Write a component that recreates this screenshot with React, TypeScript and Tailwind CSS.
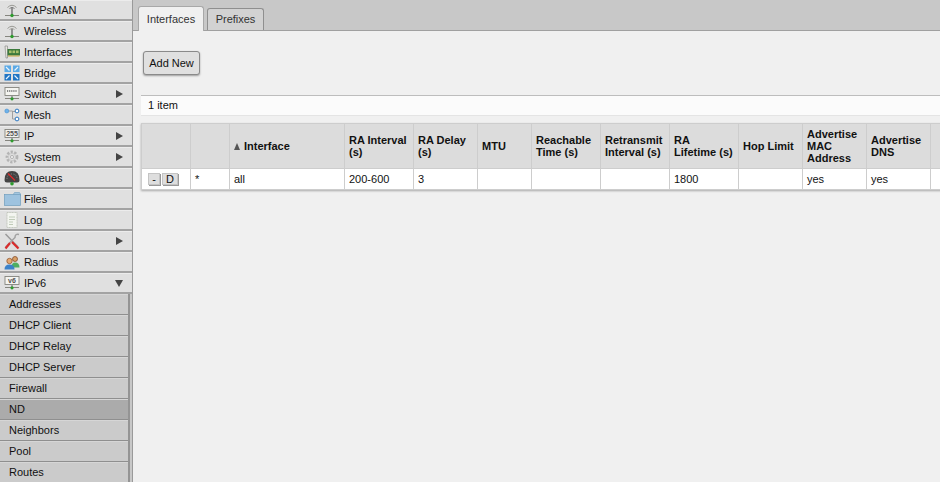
const Antenna = ({ pale }: { pale?: boolean }) => (
  <svg width="16" height="15" viewBox="0 0 16 15">
    <path d="M3.5 4.5 Q8 0 12.5 4.5" fill="none" stroke="#9a9a94" strokeWidth="1" />
    <path d="M5.5 5.5 Q8 3 10.5 5.5" fill="none" stroke={pale ? "#a8a8a2" : "#808080"} strokeWidth="1" />
    <path d="M8 5 L8 12" stroke="#666" strokeWidth="1.3" />
    <path d="M1 12.5 H15" stroke="#85857e" strokeWidth="1" />
    <circle cx="8" cy="12.5" r="1.7" fill="#2e9b2e" />
  </svg>
);

const Nic = () => (
  <svg width="16" height="14" viewBox="0 0 16 14">
    <path d="M1 1 H3.5 V13 H2 Z" fill="#e8e8e0" stroke="#8a8a8a" strokeWidth="0.7" />
    <rect x="3.5" y="4" width="12.5" height="6.5" fill="#3c7a3c" />
    <rect x="5" y="5.5" width="2.6" height="2.6" fill="#a9c06a" />
    <rect x="8.5" y="5.5" width="2.6" height="2.6" fill="#a9c06a" />
    <rect x="12" y="5.5" width="2.6" height="2.6" fill="#a9c06a" />
    <path d="M4 11 H15.5" stroke="#c9a83c" strokeWidth="1" />
  </svg>
);

const Bridge = () => (
  <svg width="16" height="16" viewBox="0 0 16 16">
    <rect x="0.5" y="0.5" width="6.5" height="6.5" fill="#5aa9e6" />
    <rect x="9" y="0.5" width="6.5" height="6.5" fill="#5aa9e6" />
    <rect x="0.5" y="9" width="6.5" height="6.5" fill="#1f74c4" />
    <rect x="9" y="9" width="6.5" height="6.5" fill="#1f74c4" />
    <path d="M2 2 L5.5 5.5 M14 2 L10.5 5.5 M2 14 L5.5 10.5 M14 14 L10.5 10.5" stroke="#e8f3fb" strokeWidth="1.2" />
  </svg>
);

const Box = ({ label, dots }: { label?: string; dots?: boolean }) => (
  <svg width="16" height="14" viewBox="0 0 16 14">
    <rect x="1" y="0.5" width="14" height="8" fill="#f4f4f0" stroke="#85857e" strokeWidth="0.9" />
    {dots && <path d="M3 4 H13" stroke="#666" strokeWidth="1.5" strokeDasharray="1.2 0.9" />}
    {label && (
      <text x="8" y="7" textAnchor="middle" fontSize="7" fontWeight="700" fontFamily="'Liberation Sans', sans-serif" fill="#555">
        {label}
      </text>
    )}
    <path d="M1 11.5 H15" stroke="#85857e" strokeWidth="1" />
    <path d="M8 9 V11.5" stroke="#666" strokeWidth="1" />
    <circle cx="8" cy="11.8" r="1.6" fill="#2e9b2e" />
  </svg>
);

const Mesh = () => (
  <svg width="16" height="14" viewBox="0 0 16 14">
    <path d="M4 3 H8.5 V11 H12 M8.5 3.5 H12" fill="none" stroke="#9a9a9a" strokeWidth="0.9" />
    <circle cx="2.8" cy="3" r="2" fill="#6fb3ea" stroke="#3a86cc" strokeWidth="0.5" />
    <circle cx="13" cy="3" r="1.9" fill="#fff" stroke="#2a76c0" strokeWidth="1" />
    <circle cx="13" cy="11" r="1.9" fill="#fff" stroke="#2a76c0" strokeWidth="1" />
  </svg>
);

const Gear = () => (
  <svg width="14" height="14" viewBox="0 0 14 14">
    <circle cx="7" cy="7" r="5" fill="none" stroke="#b4b4b4" strokeWidth="2.8" strokeDasharray="2.2 1.4" />
    <circle cx="7" cy="7" r="3.6" fill="none" stroke="#c8c8c8" strokeWidth="0.9" />
    <circle cx="7" cy="7" r="1.6" fill="#ececec" stroke="#a0a0a0" strokeWidth="0.7" />
  </svg>
);

const Gauge = () => (
  <svg width="16" height="16" viewBox="0 0 16 16">
    <path d="M0.5 10 Q0.5 1 8 1 Q15.5 1 15.5 10 Q15.5 12.5 13 12.5 H3 Q0.5 12.5 0.5 10 Z" fill="#444" />
    <path d="M3 9 Q3 4 8 4 Q13 4 13 9" fill="none" stroke="#999" strokeWidth="0.8" strokeDasharray="1 1.3" />
    <path d="M4 3.5 L11 10.5" stroke="#e02a2a" strokeWidth="1.2" />
    <circle cx="8" cy="13.8" r="1.8" fill="#2e9b2e" />
  </svg>
);

const Folder = () => (
  <svg width="17" height="14" viewBox="0 0 17 14">
    <path d="M9.5 2 L10.5 0.5 H15.5 L16.5 2 V4 H9.5 Z" fill="#a4c6df" stroke="#6f9dbd" strokeWidth="0.6" />
    <rect x="0.5" y="2.5" width="16" height="11" fill="#9ec3df" stroke="#6f9dbd" strokeWidth="0.7" />
  </svg>
);

const LogIcon = () => (
  <svg width="12" height="16" viewBox="0 0 12 16">
    <path d="M1 0.5 H11 V15.5 H1 Z" fill="#f3f5f0" stroke="#b4baae" strokeWidth="0.7" strokeDasharray="1.2 0.4" />
    <path d="M3 5 H9 M3 7.5 H9 M3 10 H7 M3 12.5 H7" stroke="#c0cbb8" strokeWidth="1.1" />
  </svg>
);

const Tools = () => (
  <svg width="16" height="17" viewBox="0 0 16 17">
    <path d="M1.5 1 L14 14" stroke="#9a9a9a" strokeWidth="1.5" />
    <path d="M15 1.5 Q11 0.5 11 4.5 L1.5 14" fill="none" stroke="#a2a2a2" strokeWidth="1.5" />
    <path d="M8 9 L14.5 15.5" stroke="#d92b2b" strokeWidth="2.2" />
    <path d="M6 10 L1.5 15.5" stroke="#d92b2b" strokeWidth="2.2" />
  </svg>
);

const Users = () => (
  <svg width="16" height="15" viewBox="0 0 16 15">
    <circle cx="11" cy="4" r="2.5" fill="#d9a066" stroke="#7a3d1d" strokeWidth="0.7" />
    <path d="M7.5 12.5 Q7.5 7.5 11 7.5 Q15.5 7.5 15.5 12.5 Z" fill="#4fae62" />
    <circle cx="5.5" cy="6" r="2.7" fill="#e3a972" stroke="#8a4a22" strokeWidth="0.7" />
    <path d="M0.5 14.5 Q0.5 9.5 5.5 9.5 Q10.5 9.5 10.5 14.5 Z" fill="#3c82c9" />
  </svg>
);

const menu = [
  { name: "CAPsMAN", icon: <Antenna /> },
  { name: "Wireless", icon: <Antenna pale /> },
  { name: "Interfaces", icon: <Nic /> },
  { name: "Bridge", icon: <Bridge /> },
  { name: "Switch", icon: <Box dots />, arrow: "right" },
  { name: "Mesh", icon: <Mesh /> },
  { name: "IP", icon: <Box label="255" />, arrow: "right" },
  { name: "System", icon: <Gear />, arrow: "right" },
  { name: "Queues", icon: <Gauge /> },
  { name: "Files", icon: <Folder /> },
  { name: "Log", icon: <LogIcon /> },
  { name: "Tools", icon: <Tools />, arrow: "right" },
  { name: "Radius", icon: <Users /> },
  { name: "IPv6", icon: <Box label="v6" />, arrow: "down" },
];

const subMenu = ["Addresses", "DHCP Client", "DHCP Relay", "DHCP Server", "Firewall", "ND", "Neighbors", "Pool", "Routes"];

const columns = [
  { w: "w-[49px]", label: "" },
  { w: "w-[39px]", label: "" },
  { w: "w-[115px]", label: "Interface", sorted: true },
  { w: "w-[69px]", label: "RA Interval (s)" },
  { w: "w-[64px]", label: "RA Delay (s)" },
  { w: "w-[54px]", label: "MTU" },
  { w: "w-[69px]", label: "Reachable Time (s)" },
  { w: "w-[69px]", label: "Retransmit Interval (s)" },
  { w: "w-[69px]", label: "RA\nLifetime (s)" },
  { w: "w-[64px]", label: "Hop Limit" },
  { w: "w-[64px]", label: "Advertise MAC Address" },
  { w: "w-[64px]", label: "Advertise DNS" },
  { w: "w-[12px]", label: "" },
];

const fila = ["*", "all", "200-600", "3", "", "", "", "1800", "", "yes", "yes", ""];

export default function App() {
  return (
    <div className="flex h-[482px] w-[940px] overflow-hidden bg-[#f0f0f0] font-['Liberation_Sans',Arial,sans-serif] text-[11px] text-[#111]">
      {/* menu lateral */}
      <div className="flex h-full w-[133px] shrink-0 flex-col overflow-hidden border-r border-[#9a9a9a] bg-[#c8c8c8]">
        {menu.map((m) => (
          <div key={m.name} className="flex h-[21px] shrink-0 items-center border-b-2 border-b-[#a3a3a3] border-t border-t-[#ececec] bg-[#e0e0e0] pl-[3px] pr-[9px]">
            <span className="mr-[3px] flex w-[18px] shrink-0 items-center justify-center">{m.icon}</span>
            <span className="flex-1">{m.name}</span>
            {m.arrow === "right" && <span className="h-0 w-0 border-y-[4px] border-l-[7px] border-y-transparent border-l-[#444]" />}
            {m.arrow === "down" && <span className="h-0 w-0 border-x-[4px] border-t-[7px] border-x-transparent border-t-[#444]" />}
          </div>
        ))}
        <div className="w-[130px] border-r-2 border-[#949494]">
          {subMenu.map((s) => (
            <div
              key={s}
              className={`flex h-[21px] shrink-0 items-center border-b border-t border-b-[#8f8f8f] border-t-[#d6d6d6] pl-[9px] ${
                s === "ND" ? "border-t-[#a6a6a6] bg-[#ababab]" : "bg-[#cbcbcb]"
              }`}
            >
              {s}
            </div>
          ))}
        </div>
      </div>

      {/* contenido */}
      <div className="flex min-w-0 flex-1 flex-col">
        <div className="flex h-[31px] shrink-0 items-end gap-[3px] border-b border-[#a0a0a0] bg-[#c8c8c8] pl-[5px]">
          <div className="mb-[-1px] flex h-[25px] w-[66px] items-center justify-center rounded-t-[3px] border border-b-0 border-[#a8a8a8] bg-[#f0f0f0] text-[#333]">
            Interfaces
          </div>
          <div className="flex h-[22px] w-[57px] items-center justify-center rounded-t-[3px] border border-b-0 border-[#8f8f8f] bg-[#d2d2d2] text-[#333]">
            Prefixes
          </div>
        </div>

        <div className="flex min-w-0 flex-1 flex-col pl-[8px]">
          <button type="button" className="ml-[2px] mt-[20px] h-[24px] w-[57px] rounded-[3px] border border-[#8a8a8a] bg-[#e0e0e0] text-[11px] shadow-[0_1px_2px_rgba(0,0,0,0.35)]">
            Add New
          </button>

          <div className="mt-[20px] flex h-[20px] w-[820px] shrink-0 items-center border-t border-[#bdbdbd] bg-[#fbfbfb] pl-[7px] shadow-[0_1px_0_#e4e4e4]">
            1 item
          </div>

          <table className="mt-[8px] w-[791px] table-fixed border-collapse shadow-[0_1px_2px_rgba(0,0,0,0.3)]">
            <thead>
              <tr>
                {columns.map((c, i) => (
                  <th key={i} className={`${c.w} h-[45px] whitespace-pre-line border border-[#cdcdcd] bg-[#dcdcdc] px-[4px] text-left align-middle font-bold leading-[12px] text-[#111]`}>
                    {c.sorted ? (
                      <span className="flex items-center">
                        <span className="mr-[4px] h-0 w-0 border-x-[3.5px] border-b-[7px] border-x-transparent border-b-[#555]" />
                        {c.label}
                      </span>
                    ) : (
                      c.label
                    )}
                  </th>
                ))}
              </tr>
            </thead>
            <tbody>
              <tr>
                <td className="h-[21px] border border-[#cdcdcd] bg-white px-[6px]">
                  <span className="flex gap-[2px]">
                    <span className="flex h-[12px] w-[12px] items-center justify-center border border-[#c4c4c4] bg-[#dedede] shadow-[1px_1px_0_#999]">-</span>
                    <span className="flex h-[12px] w-[16px] items-center justify-center border border-[#c4c4c4] bg-[#dedede] shadow-[1px_1px_0_#999]">D</span>
                  </span>
                </td>
                {fila.map((v, i) => (
                  <td key={i} className="h-[21px] border border-[#cdcdcd] bg-white px-[4px]">
                    {v}
                  </td>
                ))}
              </tr>
            </tbody>
          </table>
        </div>
      </div>
    </div>
  );
}
